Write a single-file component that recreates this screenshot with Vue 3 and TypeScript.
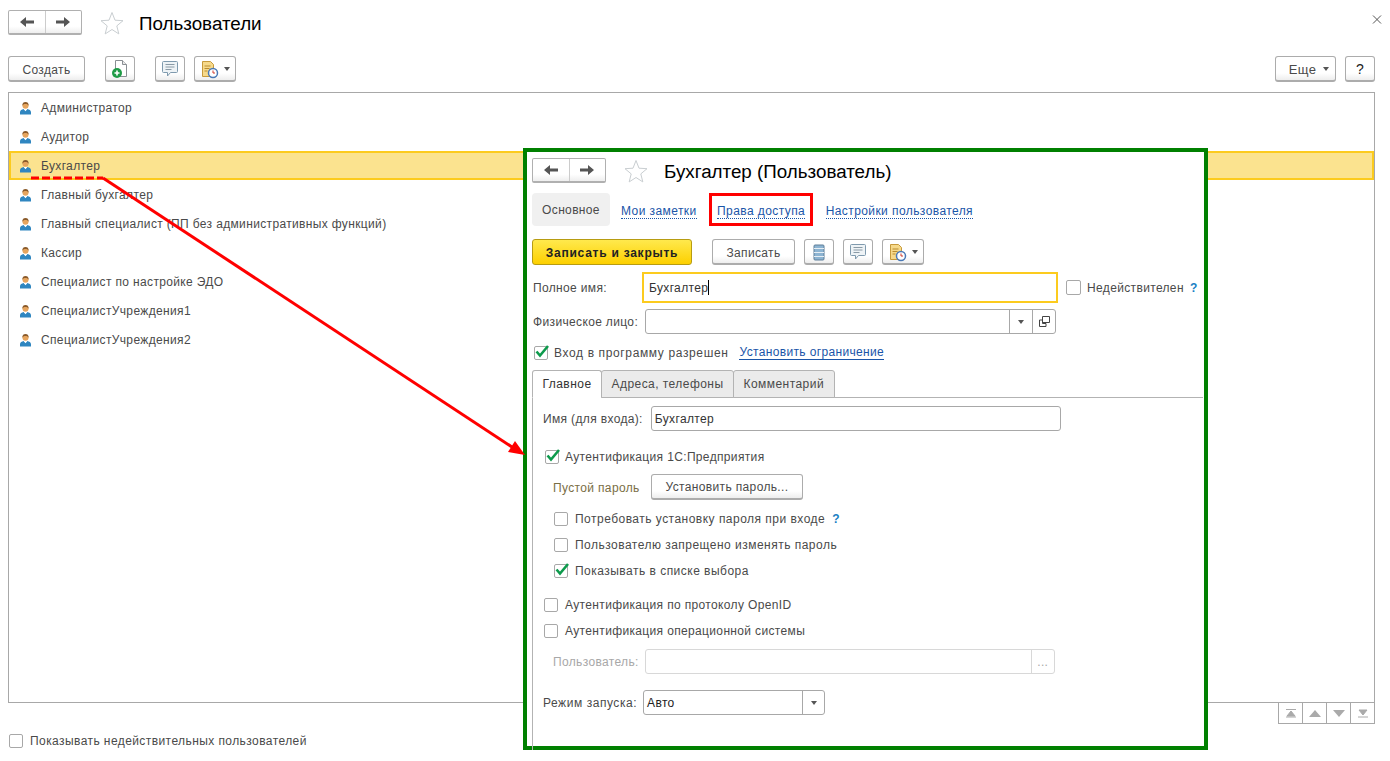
<template>
  <div class="page">
    <!-- Список пользователей -->
    <header class="head">
      <div class="nav-pair">
        <button class="nav-btn"><svg width="16" height="12" viewBox="0 0 16 12"><path d="M1 6l6-5v3.500h8v3H7V11z" fill="#555" /></svg></button>
        <button class="nav-btn"><svg width="16" height="12" viewBox="0 0 16 12"><path d="M15 6L9 1v3.500H1v3h8V11z" fill="#555" /></svg></button>
      </div>
      <svg class="star" width="24" height="24" viewBox="0 0 24 24"><path d="M12 1.500l3 7.700 8 .5-6.200 5.200 2 8L12 18.500l-6.800 4.400 2-8L1 9.700l8-.5z" fill="#fff" stroke="#c9ced1" /></svg>
      <h1 class="title">Пользователи</h1>
      <svg class="close" width="11" height="11" viewBox="0 0 11 11"><path d="M1 1.500l8 8M9 1.500l-8 8" stroke="#555" fill="none" /></svg>
    </header>

    <div class="toolbar">
      <button class="btn create">Создать</button>
      <button class="btn icon add">
        <svg width="18" height="20" viewBox="0 0 18 20"><path d="M4.500 1.500h7l4 4v12h-11z" fill="#fff" stroke="#8a8f94" /><path d="M11.500 1.500v4h4" fill="#e8e8e8" stroke="#8a8f94" /><circle cx="6" cy="14" r="5" fill="#1e9b46" /><path d="M3.500 14h5M6 11.500v5" stroke="#fff" stroke-width="1.600" /></svg>
      </button>
      <button class="btn icon note">
        <svg width="18" height="18" viewBox="0 0 18 18"><path d="M2.500 1.500h13a1 1 0 0 1 1 1v9a1 1 0 0 1-1 1h-6l-3 3.500v-3.500h-4a1 1 0 0 1-1-1v-9a1 1 0 0 1 1-1z" fill="#eef3f6" stroke="#7f9aae" /><path d="M4.500 4.500h9M4.500 7h9M4.500 9.500h6" stroke="#8a9aa6" /></svg>
      </button>
      <button class="btn report">
        <svg width="18" height="19" viewBox="0 0 18 19"><path d="M1.500 1.500h8l3 3v12h-11z" fill="#f6d98a" stroke="#c79a3c" /><path d="M3.500 6h6M3.500 8.500h5M3.500 11h3" stroke="#b98c30" /><circle cx="12" cy="13" r="4.500" fill="#fff" stroke="#4a79b5" stroke-width="1.500" /><path d="M12 10.500V13h2" stroke="#d0392b" fill="none" /></svg>
        <i class="caret"></i>
      </button>
      <span class="spacer"></span>
      <button class="btn more"><span class="more-text">Еще</span><i class="caret"></i></button>
      <button class="btn help">?</button>
    </div>

    <ul class="list">
      <li v-for="name in users" :key="name" class="row" :class="{ selected: name === 'Бухгалтер' }">
        <svg class="person" width="11" height="14" viewBox="0 0 12 14"><path d="M0 14v-2.500C0 9.500 2 8.500 4 8l2 2 2-2c2 .5 4 1.500 4 3.500V14z" fill="#2f86c0" /><path d="M4 8l2 2.500L8 8z" fill="#fff" /><circle cx="6" cy="4.500" r="3.300" fill="#e6a55e" /><path d="M2.600 4.500C2.400 1.500 4 .5 6 .5s3.600 1 3.400 4C8.500 3 7.500 2.600 6 2.600S3.500 3 2.600 4.500z" fill="#8a5a2a" /></svg>
        {{ name }}
      </li>
    </ul>

    <div class="pager">
      <button class="pg"><svg width="12" height="9" viewBox="0 0 12 9"><path d="M1 .5h10M6 2l4 5H2z" stroke="#aaa" fill="#aaa" /><path d="M1 8h10" stroke="#aaa" /></svg></button>
      <button class="pg"><svg width="12" height="7" viewBox="0 0 12 7"><path d="M6 0l6 7H0z" fill="#aaa" /></svg></button>
      <button class="pg"><svg width="12" height="7" viewBox="0 0 12 7"><path d="M6 7L0 0h12z" fill="#aaa" /></svg></button>
      <button class="pg"><svg width="12" height="9" viewBox="0 0 12 9"><path d="M6 6L2 1h8z" stroke="#aaa" fill="#aaa" /><path d="M1 8h10" stroke="#aaa" /></svg></button>
    </div>

    <label class="invalid-row"><span class="check"></span>Показывать недействительных пользователей</label>

    <!-- Окно пользователя поверх списка -->
    <section class="dialog">
      <div class="d-head">
        <div class="nav-pair">
          <button class="nav-btn"><svg width="16" height="12" viewBox="0 0 16 12"><path d="M1 6l6-5v3.500h8v3H7V11z" fill="#555" /></svg></button>
          <button class="nav-btn"><svg width="16" height="12" viewBox="0 0 16 12"><path d="M15 6L9 1v3.500H1v3h8V11z" fill="#555" /></svg></button>
        </div>
        <svg class="star" width="24" height="24" viewBox="0 0 24 24"><path d="M12 1.500l3 7.700 8 .5-6.200 5.200 2 8L12 18.500l-6.800 4.400 2-8L1 9.700l8-.5z" fill="#fff" stroke="#c9ced1" /></svg>
        <h2 class="title d-title">Бухгалтер (Пользователь)</h2>
      </div>

      <nav class="d-links">
        <span class="link-main">Основное</span>
        <a class="link first">Мои заметки</a>
        <span class="red-box"><a class="link">Права доступа</a></span>
        <a class="link">Настройки пользователя</a>
      </nav>

      <div class="d-tools">
        <button class="btn-yellow">Записать и закрыть</button>
        <button class="btn save">Записать</button>
        <button class="btn icon">
          <svg width="12" height="17" viewBox="0 0 12 17"><rect x="1" y="1" width="10" height="15" rx="1" fill="#8db4d2" stroke="#5f7f99" /><path d="M1 4.500h10M1 8.500h10M1 12.500h10" stroke="#e6eef4" /></svg>
        </button>
        <button class="btn icon">
          <svg width="18" height="18" viewBox="0 0 18 18"><path d="M2.500 1.500h13a1 1 0 0 1 1 1v9a1 1 0 0 1-1 1h-6l-3 3.500v-3.500h-4a1 1 0 0 1-1-1v-9a1 1 0 0 1 1-1z" fill="#eef3f6" stroke="#7f9aae" /><path d="M4.500 4.500h9M4.500 7h9M4.500 9.500h6" stroke="#8a9aa6" /></svg>
        </button>
        <button class="btn report">
          <svg width="18" height="19" viewBox="0 0 18 19"><path d="M1.500 1.500h8l3 3v12h-11z" fill="#f6d98a" stroke="#c79a3c" /><path d="M3.500 6h6M3.500 8.500h5M3.500 11h3" stroke="#b98c30" /><circle cx="12" cy="13" r="4.500" fill="#fff" stroke="#4a79b5" stroke-width="1.500" /><path d="M12 10.500V13h2" stroke="#d0392b" fill="none" /></svg>
          <i class="caret"></i>
        </button>
      </div>

      <div class="f-name">
        <span class="f-label w-name">Полное имя:</span>
        <div class="focus-input">Бухгалтер<i class="cursor"></i></div>
        <span class="check big"></span>
        <span class="f-text inv">Недействителен</span>
        <span class="q">?</span>
      </div>

      <div class="f-person">
        <span class="f-label w-person">Физическое лицо:</span>
        <div class="input person-input">
          <span class="grow"></span>
          <span class="cell"><i class="caret"></i></span>
          <span class="cell">
            <svg width="11" height="11" viewBox="0 0 11 11"><path d="M3.500.5h7v6h-7z M.5 4h3v3.500H7v3H.5z" fill="none" stroke="#444" /></svg>
          </span>
        </div>
      </div>

      <div class="f-login">
        <label class="check-line login-line">
          <span class="check"><svg class="tick" width="16" height="15" viewBox="0 0 16 15"><path d="M2.500 7.500l3.500 4L14 2" fill="none" stroke="#0d9a4c" stroke-width="2.600" /></svg></span>
          Вход в программу разрешен
        </label>
        <a class="plain-link">Установить ограничение</a>
      </div>

      <div class="tabs">
        <span v-for="(t, i) in tabs" :key="t" class="tab" :class="{ active: i === 0 }">{{ t }}</span>
      </div>

      <div class="panel">
        <div class="p-login">
          <span class="f-label">Имя (для входа):</span>
          <div class="input login-input">Бухгалтер</div>
        </div>

        <label class="check-line auth-1c">
          <span class="check"><svg class="tick" width="16" height="15" viewBox="0 0 16 15"><path d="M2.500 7.500l3.500 4L14 2" fill="none" stroke="#0d9a4c" stroke-width="2.600" /></svg></span>
          Аутентификация 1С:Предприятия
        </label>

        <div class="p-pass">
          <span class="pass-state">Пустой пароль</span>
          <button class="btn set-pass">Установить пароль...</button>
        </div>

        <label class="check-line sub first-sub">
          <span class="check"></span>Потребовать установку пароля при входе<span class="q sub-q">?</span>
        </label>
        <label class="check-line sub"><span class="check"></span>Пользователю запрещено изменять пароль</label>
        <label class="check-line sub">
          <span class="check"><svg class="tick" width="16" height="15" viewBox="0 0 16 15"><path d="M2.500 7.500l3.500 4L14 2" fill="none" stroke="#0d9a4c" stroke-width="2.600" /></svg></span>
          Показывать в списке выбора
        </label>

        <label class="check-line auth-openid"><span class="check"></span>Аутентификация по протоколу OpenID</label>
        <label class="check-line auth-os"><span class="check"></span>Аутентификация операционной системы</label>

        <div class="p-osuser">
          <span class="f-label muted">Пользователь:</span>
          <div class="input os-input">
            <span class="grow"></span>
            <span class="cell dots">...</span>
          </div>
        </div>

        <div class="p-mode">
          <span class="f-label mode-label">Режим запуска:</span>
          <div class="input mode-input">
            <span class="grow">Авто</span>
            <span class="cell"><i class="caret"></i></span>
          </div>
        </div>
      </div>
    </section>

    <!-- Пометки поверх снимка -->
    <svg class="arrow" width="1390" height="761" viewBox="0 0 1390 761">
      <path d="M31 178H103" stroke="#f00" stroke-width="3" stroke-dasharray="8 3" fill="none" />
      <path d="M103 178L512 447" stroke="#f00" stroke-width="3" fill="none" />
      <path d="M525 455L508 452 515 441z" fill="#f00" />
    </svg>
  </div>
</template>

<script setup lang="ts">
const users: string[] = [
  'Администратор',
  'Аудитор',
  'Бухгалтер',
  'Главный бухгалтер',
  'Главный специалист (ПП без административных функций)',
  'Кассир',
  'Специалист по настройке ЭДО',
  'СпециалистУчреждения1',
  'СпециалистУчреждения2',
]

const tabs: string[] = ['Главное', 'Адреса, телефоны', 'Комментарий']
</script>

<style>
html, body {
  margin: 0;
  background: #fff;
  overflow: hidden;
}
</style>

<style scoped>
.page {
  position: relative;
  width: 1390px;
  height: 761px;
  overflow: hidden;
  background: #fff;
  font-family: "Liberation Sans", Arial, sans-serif;
  font-size: 12px;
  letter-spacing: 0.35px;
  color: #4a4a4a;
  display: flex;
  flex-direction: column;
}
button {
  font: inherit;
  letter-spacing: inherit;
  color: inherit;
  padding: 0;
  cursor: default;
}

.head {
  display: flex;
  align-items: center;
  height: 25px;
  margin: 10px 0 0 8px;
  position: relative;
}
.nav-pair {
  display: flex;
  width: 74px;
  height: 25px;
  box-sizing: border-box;
  border: 1px solid #b0b0b0;
  border-bottom-width: 2px;
  border-radius: 2px;
  background: linear-gradient(#fff 70%, #eee);
}
.nav-btn {
  flex: 1;
  border: 0;
  background: none;
  display: flex;
  align-items: center;
  justify-content: center;
}
.nav-btn + .nav-btn {
  border-left: 1px solid #ccc;
}
.star {
  margin-left: 18px;
  flex: none;
}
.title {
  margin: 2px 0 0 15px;
  font-size: 18.8px;
  font-weight: 400;
  letter-spacing: 0;
  color: #000;
}
.d-title { margin-left: 16px; }
.close {
  position: absolute;
  right: 7px;
  top: 4px;
}

.toolbar {
  display: flex;
  height: 26px;
  margin: 21px 15px 0 8px;
}
.btn {
  height: 26px;
  box-sizing: border-box;
  border: 1px solid #acacac;
  border-bottom-width: 2px;
  border-radius: 3px;
  background: linear-gradient(#fff 70%, #eee);
  display: flex;
  align-items: center;
  justify-content: center;
  flex: none;
  padding-top: 1px;
}
.create { width: 77px; padding-top: 2px; }
.icon { width: 30px; }
.add { margin-left: 20px; }
.note { margin-left: 20px; }
.report {
  width: 42px;
  margin-left: 9px;
  gap: 5px;
}
.spacer { flex: 1; }
.more {
  width: 61px;
  gap: 7px;
  padding-left: 7px;
}
.more-text { font-size: 13px; }
.help {
  width: 30px;
  margin-left: 9px;
  font-size: 14px;
  color: #222;
}
.caret {
  display: inline-block;
  width: 0;
  height: 0;
  border: 3px solid transparent;
  border-top: 4px solid #555;
  border-bottom: 0;
}

.list {
  list-style: none;
  margin: 10px 15px 0 8px;
  padding: 0;
  height: 611px;
  box-sizing: border-box;
  border: 1px solid #a8a8a8;
}
.row {
  height: 29px;
  box-sizing: border-box;
  display: flex;
  align-items: center;
  padding-left: 11px;
  gap: 10px;
}
.person { flex: none; }
.selected {
  background: #fbe38f;
  border: 2px solid #fccb1e;
  padding-left: 9px;
}

.pager {
  display: flex;
  justify-content: flex-end;
  margin-right: 15px;
  height: 21px;
}
.pg {
  width: 25px;
  height: 21px;
  box-sizing: border-box;
  border: 1px solid #a8a8a8;
  border-top: 0;
  margin-left: -1px;
  background: #fff;
  display: flex;
  align-items: center;
  justify-content: center;
}

.invalid-row {
  display: flex;
  align-items: center;
  gap: 7px;
  margin: 9px 0 0 9px;
  height: 16px;
  letter-spacing: 0.42px;
}
.check {
  position: relative;
  display: inline-block;
  width: 14px;
  height: 14px;
  box-sizing: border-box;
  border: 1px solid #a8a8a8;
  border-radius: 2px;
  background: #fff;
  flex: none;
}
.check.big {
  width: 15px;
  height: 15px;
}
.tick {
  position: absolute;
  left: -1px;
  top: -3px;
}

.dialog {
  position: absolute;
  left: 523px;
  top: 148px;
  width: 685px;
  height: 602px;
  box-sizing: border-box;
  border: 4px solid #008000;
  background: #fff;
  padding: 6px 1px 0 5px;
}
.d-head {
  display: flex;
  align-items: center;
  height: 25px;
}
.d-links {
  display: flex;
  align-items: center;
  height: 33px;
  margin-top: 10px;
}
.link-main {
  width: 78px;
  height: 33px;
  border-radius: 4px;
  background: #f0f0f0;
  display: flex;
  align-items: center;
  justify-content: center;
}
.link {
  color: #1a55a8;
  border-bottom: 1px dotted #1a55a8;
  line-height: 14px;
  margin-top: 3px;
  letter-spacing: 0.42px;
}
.first { margin-left: 11px; }
.red-box {
  width: 104px;
  height: 33px;
  box-sizing: border-box;
  border: 3px solid #f00;
  margin: 0 13px 0 12px;
  padding-left: 1px;
  display: flex;
  align-items: center;
  justify-content: center;
}
.d-tools {
  display: flex;
  height: 26px;
  margin-top: 13px;
}
.btn-yellow {
  width: 160px;
  height: 26px;
  box-sizing: border-box;
  border: 1px solid #b79c12;
  border-radius: 3px;
  background: linear-gradient(#ffe94d, #fdd000);
  font-weight: 700;
  letter-spacing: 0.75px;
  color: #222;
  margin-right: 20px;
  padding-top: 1px;
}
.save {
  width: 83px;
  margin-right: 9px;
  padding-top: 2px;
}
.d-tools .icon { margin-right: 9px; }
.d-tools .report { margin-left: 0; }

.f-name {
  display: flex;
  align-items: center;
  height: 31px;
  margin-top: 7px;
}
.f-label { flex: none; }
.w-name {
  width: 109px;
  padding-left: 1px;
}
.focus-input {
  width: 416px;
  height: 31px;
  box-sizing: border-box;
  border: 2px solid #fccb1e;
  display: flex;
  align-items: center;
  padding-left: 5px;
  color: #333;
  margin-right: 8px;
}
.cursor {
  width: 1px;
  height: 15px;
  background: #000;
}
.inv { margin-left: 6px; }
.q {
  color: #1a7fc4;
  font-weight: 700;
  margin-left: 6px;
}
.f-person {
  display: flex;
  align-items: center;
  height: 25px;
  margin-top: 6px;
}
.w-person {
  width: 112px;
  padding-left: 1px;
}
.input {
  height: 25px;
  box-sizing: border-box;
  border: 1px solid #a8a8a8;
  border-radius: 3px;
  background: #fff;
  display: flex;
  align-items: center;
  color: #333;
}
.person-input { width: 411px; }
.grow {
  flex: 1;
  padding-left: 3px;
}
.cell {
  width: 22px;
  height: 100%;
  border-left: 1px solid #a8a8a8;
  display: flex;
  align-items: center;
  justify-content: center;
}
.f-login {
  display: flex;
  align-items: center;
  height: 20px;
  margin: 9px 0 0 2px;
}
.check-line {
  display: flex;
  align-items: center;
  gap: 6px;
}
.login-line { letter-spacing: 0.63px; }
.plain-link {
  color: #1a55a8;
  border-bottom: 1px solid #1a55a8;
  line-height: 13px;
  margin-left: 11px;
}

.tabs {
  display: flex;
  height: 28px;
  margin-top: 7px;
  border-bottom: 1px solid #b3b3b3;
  box-sizing: border-box;
}
.tab {
  height: 28px;
  box-sizing: border-box;
  border: 1px solid #b3b3b3;
  border-radius: 3px 3px 0 0;
  background: #ebebeb;
  padding: 0 9.5px;
  display: flex;
  align-items: center;
  margin-left: -1px;
  letter-spacing: 0.45px;
}
.tab:first-child { margin-left: 0; }
.tab.active {
  background: #fff;
  border-bottom-color: #fff;
  color: #333;
}

.panel {
  border-left: 1px solid #b3b3b3;
  height: 352px;
  padding-left: 10px;
}
.p-login {
  display: flex;
  align-items: center;
  height: 25px;
  padding-top: 8px;
  gap: 8px;
}
.login-input {
  width: 410px;
  padding-left: 3px;
}
.auth-1c {
  margin: 18px 0 0 2px;
  height: 15px;
}
.p-pass {
  display: flex;
  align-items: center;
  height: 26px;
  margin: 10px 0 0 10px;
}
.pass-state {
  width: 98px;
  color: #7a6e45;
  padding-top: 1px;
}
.set-pass { width: 152px; }
.sub {
  height: 15px;
  margin: 11px 0 0 11px;
  gap: 7px;
  letter-spacing: 0.48px;
}
.first-sub { margin-top: 11px; }
.sub-q { margin-left: 0; }
.auth-openid {
  height: 15px;
  margin: 19px 0 0 1px;
  gap: 7px;
}
.auth-os {
  height: 15px;
  margin: 11px 0 0 1px;
  gap: 7px;
}
.p-osuser {
  display: flex;
  align-items: center;
  height: 25px;
  margin: 11px 0 0 10px;
  gap: 6px;
}
.muted { color: #a8a8a8; }
.os-input {
  width: 410px;
  border-color: #d8d8d8;
}
.os-input .cell {
  border-color: #d8d8d8;
  color: #a8a8a8;
}
.p-mode {
  display: flex;
  align-items: center;
  height: 25px;
  margin-top: 16px;
  gap: 6px;
}
.mode-label { letter-spacing: 0.55px; }
.mode-input { width: 182px; }
.mode-input .cell { width: 21px; }
.mode-input .grow { color: #222; }

.arrow {
  position: absolute;
  left: 0;
  top: 0;
  pointer-events: none;
}
</style>
